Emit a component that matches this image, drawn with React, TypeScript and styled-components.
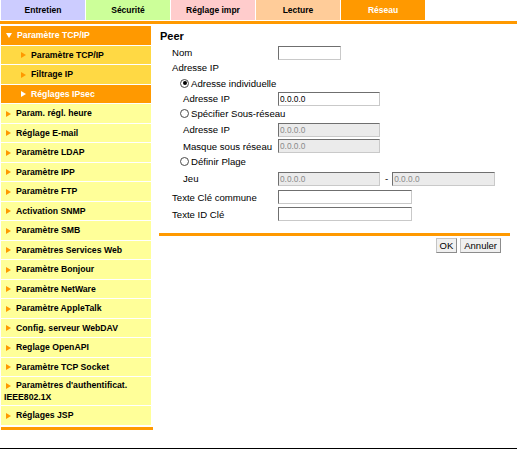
import styled, { createGlobalStyle } from "styled-components";

const GlobalStyle = createGlobalStyle`
	body {
		margin: 0;
		background: #ffffff;
		font-family: "Liberation Sans", Arial, sans-serif;
		color: #000000;
	}
`;

const Page = styled.div`
	width: 517px;
`;

const TabBar = styled.div`
	display: flex;
	gap: 1px;
	padding-left: 1px;
	height: 20px;
`;

const Tab = styled.div<{ $bg: string; $active?: boolean }>`
	width: 84px;
	display: flex;
	align-items: center;
	justify-content: center;
	background: ${(p) => p.$bg};
	color: ${(p) => (p.$active ? "#ffffff" : "#000000")};
	font-size: 8.5px;
	font-weight: bold;
`;

const TabRule = styled.div`
	height: 3px;
	margin-top: 1px;
	background: #ff9900;
`;

const Main = styled.div`
	display: flex;
	align-items: flex-start;
	margin-top: 2px;
`;

const Sidebar = styled.div`
	width: 152px;
	margin-left: 1px;
	display: flex;
	flex-direction: column;
`;

const Menu = styled.div`
	display: flex;
	flex-direction: column;
	gap: 1px;
`;

const MenuItem = styled.div<{ $bg: string; $light?: boolean; $sub?: boolean; $tight?: boolean }>`
	width: 150px;
	box-sizing: border-box;
	background: ${(p) => p.$bg};
	color: ${(p) => (p.$light ? "#ffffff" : "#000000")};
	font-size: 8.7px;
	font-weight: bold;
	line-height: 12px;
	padding: ${(p) => (p.$tight ? "2px" : "3.25px")} 2px ${(p) => (p.$tight ? "2px" : "3.25px")}
		${(p) => (p.$sub ? "19px" : "3px")};
`;

const Arrow = styled.span<{ $color: string; $sub?: boolean }>`
	display: inline-block;
	width: 0;
	height: 0;
	border-left: 5px solid ${(p) => p.$color};
	border-top: 3.5px solid transparent;
	border-bottom: 3.5px solid transparent;
	margin: 0 5px 0 ${(p) => (p.$sub ? "1px" : "2px")};
	vertical-align: -0.5px;
`;

const DownArrow = styled.span`
	display: inline-block;
	width: 0;
	height: 0;
	border-top: 5px solid #ffffff;
	border-left: 3.5px solid transparent;
	border-right: 3.5px solid transparent;
	margin: 0 5px 0 2px;
	vertical-align: 0.5px;
`;

const SideRule = styled.div`
	height: 3px;
	margin-top: 2px;
	background: #ff9900;
`;

const Content = styled.div`
	margin-left: 6px;
	width: 351px;
`;

const Heading = styled.div`
	font-size: 11px;
	font-weight: bold;
	height: 17px;
	line-height: 17px;
	margin-top: 2px;
	padding-left: 1px;
`;

const Row = styled.div<{ $h: number; $indent?: number }>`
	display: flex;
	align-items: center;
	height: ${(p) => p.$h}px;
	padding-left: ${(p) => p.$indent ?? 0}px;
	font-size: 9.6px;
	white-space: nowrap;
`;

const Label = styled.div<{ $indent: number }>`
	width: 119px;
	box-sizing: border-box;
	padding-left: ${(p) => p.$indent}px;
`;

const Field = styled.input<{ $w: number; $off?: boolean }>`
	width: ${(p) => p.$w}px;
	height: 14px;
	box-sizing: border-box;
	margin: 0;
	padding: 0 1px;
	border: 1px solid;
	border-color: #6f6f6f #c9c9c9 #c9c9c9 #6f6f6f;
	background: ${(p) => (p.$off ? "#ebebeb" : "#ffffff")};
	color: ${(p) => (p.$off ? "#8a8a8a" : "#000000")};
	font-family: "Liberation Sans", Arial, sans-serif;
	font-size: 8.3px;
	outline: none;
`;

const Radio = styled.span<{ $on?: boolean }>`
	width: 9px;
	height: 9px;
	box-sizing: border-box;
	border: 1px solid #4a4a4a;
	border-radius: 50%;
	background: #ffffff;
	margin-right: 2px;
	display: flex;
	align-items: center;
	justify-content: center;

	&::after {
		content: "";
		width: 4px;
		height: 4px;
		border-radius: 50%;
		background: ${(p) => (p.$on ? "#000000" : "transparent")};
	}
`;

const Dash = styled.span`
	margin: 0 4px 0 5px;
	font-size: 9.6px;
`;

const ContentRule = styled.div`
	height: 3px;
	margin-top: 11px;
	background: #ff9900;
`;

const ButtonBar = styled.div`
	display: flex;
	justify-content: flex-end;
	gap: 3px;
	margin-top: 2px;
	padding-right: 9px;
`;

const Button = styled.button`
	height: 15px;
	margin: 0;
	padding: 0 3px;
	border: 1px solid;
	border-color: #c4c4c4 #8c8c8c #8c8c8c #c4c4c4;
	border-radius: 0;
	background: #f0f0f0;
	color: #000000;
	font-family: "Liberation Sans", Arial, sans-serif;
	font-size: 9.5px;
	line-height: 13px;
`;

const Footer = styled.div`
	margin-top: 18px;
	border-top: 1px solid #000000;
`;

const tabs = [
	{ label: "Entretien", bg: "#ccccff" },
	{ label: "Sécurité", bg: "#ccff99" },
	{ label: "Réglage impr", bg: "#ffcccc" },
	{ label: "Lecture", bg: "#ffcc99" },
	{ label: "Réseau", bg: "#ff9900", active: true },
];

const subItems = [
	{ label: "Paramètre TCP/IP" },
	{ label: "Filtrage IP" },
	{ label: "Réglages IPsec", active: true },
];

const topItems = [
	"Param. régl. heure",
	"Réglage E-mail",
	"Paramètre LDAP",
	"Paramètre IPP",
	"Paramètre FTP",
	"Activation SNMP",
	"Paramètre SMB",
	"Paramètres Services Web",
	"Paramètre Bonjour",
	"Paramètre NetWare",
	"Paramètre AppleTalk",
	"Config. serveur WebDAV",
	"Reglage OpenAPI",
	"Paramètre TCP Socket",
	"Paramètres d'authentificat. IEEE802.1X",
	"Réglages JSP",
];

const App = () => {
	return (
		<Page>
			<GlobalStyle />
			<TabBar>
				{tabs.map((t) => (
					<Tab key={t.label} $bg={t.bg} $active={t.active}>
						{t.label}
					</Tab>
				))}
			</TabBar>
			<TabRule />
			<Main>
				<Sidebar>
					<Menu>
						<MenuItem $bg="#ff9900" $light>
							<DownArrow />
							Paramètre TCP/IP
						</MenuItem>
						{subItems.map((s) => (
							<MenuItem
								key={s.label}
								$bg={s.active ? "#ff9900" : "#ffd944"}
								$light={s.active}
								$sub
							>
								<Arrow $color={s.active ? "#ffffff" : "#ff9900"} $sub />
								{s.label}
							</MenuItem>
						))}
						{topItems.map((label) => (
							<MenuItem key={label} $bg="#ffff99" $tight={label.includes("IEEE")}>
								<Arrow $color="#ff9900" />
								{label}
							</MenuItem>
						))}
					</Menu>
					<SideRule />
				</Sidebar>
				<Content>
					<Heading>Peer</Heading>
					<Row $h={15}>
						<Label $indent={13}>Nom</Label>
						<Field $w={63} readOnly defaultValue="" />
					</Row>
					<Row $h={15}>
						<Label $indent={13}>Adresse IP</Label>
					</Row>
					<Row $h={16} $indent={21}>
						<Radio $on />
						Adresse individuelle
					</Row>
					<Row $h={15}>
						<Label $indent={24}>Adresse IP</Label>
						<Field $w={102} readOnly defaultValue="0.0.0.0" />
					</Row>
					<Row $h={15} $indent={21}>
						<Radio />
						Spécifier Sous-réseau
					</Row>
					<Row $h={17}>
						<Label $indent={24}>Adresse IP</Label>
						<Field $w={102} $off readOnly defaultValue="0.0.0.0" />
					</Row>
					<Row $h={16}>
						<Label $indent={24}>Masque sous réseau</Label>
						<Field $w={102} $off readOnly defaultValue="0.0.0.0" />
					</Row>
					<Row $h={15} $indent={21}>
						<Radio />
						Définir Plage
					</Row>
					<Row $h={19}>
						<Label $indent={24}>Jeu</Label>
						<Field $w={102} $off readOnly defaultValue="0.0.0.0" />
						<Dash>-</Dash>
						<Field $w={103} $off readOnly defaultValue="0.0.0.0" />
					</Row>
					<Row $h={18}>
						<Label $indent={13}>Texte Clé commune</Label>
						<Field $w={134} readOnly defaultValue="" />
					</Row>
					<Row $h={16}>
						<Label $indent={13}>Texte ID Clé</Label>
						<Field $w={134} readOnly defaultValue="" />
					</Row>
					<ContentRule />
					<ButtonBar>
						<Button>OK</Button>
						<Button>Annuler</Button>
					</ButtonBar>
				</Content>
			</Main>
			<Footer />
		</Page>
	);
};

export default App;
